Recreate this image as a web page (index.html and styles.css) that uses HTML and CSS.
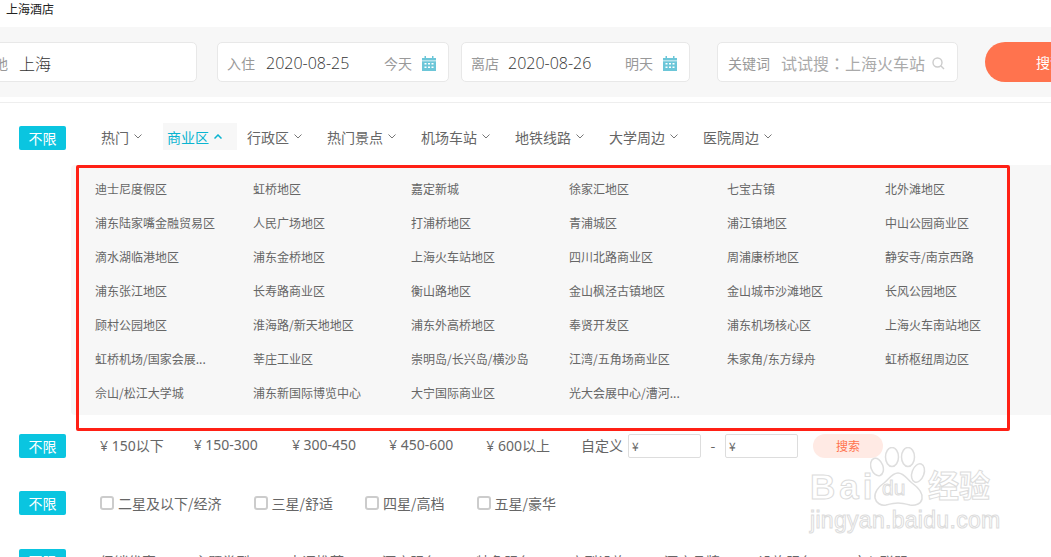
FILE: index.html
```html
<!DOCTYPE html>
<html lang="zh-CN">
<head>
    <meta charset="UTF-8">
    <title>上海酒店</title>
    <link rel="stylesheet" href="styles.css">
</head>
<body>
    <div class="page-title">上海酒店</div>

    <div class="search-wrap">
        <div class="search-band">
            <div class="field field-dest"><span class="field-label">目的地</span><span class="field-value">上海</span></div>
            <div class="field field-date field-in">
                <span class="field-label">入住</span><span class="field-value">2020-08-25</span>
                <span class="field-day">今天</span>
                <svg class="cal-icon" viewBox="0 0 14 15"><path fill="#6cc6d8" d="M0 2h2.5V0H4v2h6V0h1.5v2H14v13H0z"/><path fill="#fff" d="M0 4.5h14v.8H0zM2.5 7h2v1.5h-2zM6 7h2v1.5H6zm3.500 0h2v1.5h-2zM2.5 10.5h2V12h-2zm3.5 0h2V12H6zm3.5 0h2V12h-2z"/></svg>
            </div>
            <div class="field field-date field-out">
                <span class="field-label">离店</span><span class="field-value">2020-08-26</span>
                <span class="field-day">明天</span>
                <svg class="cal-icon" viewBox="0 0 14 15"><path fill="#6cc6d8" d="M0 2h2.5V0H4v2h6V0h1.5v2H14v13H0z"/><path fill="#fff" d="M0 4.5h14v.8H0zM2.5 7h2v1.5h-2zM6 7h2v1.5H6zm3.500 0h2v1.5h-2zM2.5 10.5h2V12h-2zm3.5 0h2V12H6zm3.5 0h2V12h-2z"/></svg>
            </div>
            <div class="field field-key">
                <span class="field-label">关键词</span><span class="field-hint" lang="zh-TW">试试搜：上海火车站</span>
                <svg class="search-icon" viewBox="0 0 13 13"><circle cx="5.5" cy="5.5" r="4.5" fill="none" stroke="#ccc" stroke-width="1.4"/><path d="M9 9l3 3" stroke="#ccc" stroke-width="1.4"/></svg>
            </div>
            <button class="search-btn">搜索</button>
        </div>
    </div>

    <div class="filter-row filter-area">
        <span class="badge">不限</span>
        <ul class="tabs">
            <li class="tab">热门<svg class="chev" viewBox="0 0 8 5"><path d="M.5.5L4 4 7.5.5"/></svg></li>
            <li class="tab active">商业区<svg class="chev" viewBox="0 0 8 5"><path d="M.5 4.5L4 1l3.5 3.5"/></svg></li>
            <li class="tab">行政区<svg class="chev" viewBox="0 0 8 5"><path d="M.5.5L4 4 7.5.5"/></svg></li>
            <li class="tab">热门景点<svg class="chev" viewBox="0 0 8 5"><path d="M.5.5L4 4 7.5.5"/></svg></li>
            <li class="tab">机场车站<svg class="chev" viewBox="0 0 8 5"><path d="M.5.5L4 4 7.5.5"/></svg></li>
            <li class="tab">地铁线路<svg class="chev" viewBox="0 0 8 5"><path d="M.5.5L4 4 7.5.5"/></svg></li>
            <li class="tab">大学周边<svg class="chev" viewBox="0 0 8 5"><path d="M.5.5L4 4 7.5.5"/></svg></li>
            <li class="tab">医院周边<svg class="chev" viewBox="0 0 8 5"><path d="M.5.5L4 4 7.5.5"/></svg></li>
        </ul>
    </div>

    <div class="area-panel">
        <span>迪士尼度假区</span><span>虹桥地区</span><span>嘉定新城</span><span>徐家汇地区</span><span>七宝古镇</span><span>北外滩地区</span>
        <span>浦东陆家嘴金融贸易区</span><span>人民广场地区</span><span>打浦桥地区</span><span>青浦城区</span><span>浦江镇地区</span><span>中山公园商业区</span>
        <span>滴水湖临港地区</span><span>浦东金桥地区</span><span>上海火车站地区</span><span>四川北路商业区</span><span>周浦康桥地区</span><span>静安寺/南京西路</span>
        <span>浦东张江地区</span><span>长寿路商业区</span><span>衡山路地区</span><span>金山枫泾古镇地区</span><span>金山城市沙滩地区</span><span>长风公园地区</span>
        <span>顾村公园地区</span><span>淮海路/新天地地区</span><span>浦东外高桥地区</span><span>奉贤开发区</span><span>浦东机场核心区</span><span>上海火车南站地区</span>
        <span>虹桥机场/国家会展...</span><span>莘庄工业区</span><span>崇明岛/长兴岛/横沙岛</span><span>江湾/五角场商业区</span><span>朱家角/东方绿舟</span><span>虹桥枢纽周边区</span>
        <span>佘山/松江大学城</span><span>浦东新国际博览中心</span><span>大宁国际商业区</span><span>光大会展中心/漕河...</span>
    </div>

    <div class="filter-row price-area">
        <span class="badge">不限</span>
        <div class="prices">
            <span>¥ 150以下</span><span class="price-range first-range">¥ 150-300</span><span class="price-range">¥ 300-450</span><span class="price-range">¥ 450-600</span><span>¥ 600以上</span>
        </div>
        <div class="custom-price">
            <span>自定义</span>
            <div class="price-input">¥</div>
            <span class="dash">-</span>
            <div class="price-input">¥</div>
            <button class="price-btn">搜索</button>
        </div>
    </div>

    <div class="filter-row star-area">
        <span class="badge">不限</span>
        <div class="stars">
            <label class="star"><i class="check"></i>二星及以下/经济</label>
            <label class="star"><i class="check"></i>三星/舒适</label>
            <label class="star"><i class="check"></i>四星/高档</label>
            <label class="star"><i class="check"></i>五星/豪华</label>
        </div>
    </div>

    <div class="filter-row more-area">
        <span class="badge">不限</span>
        <div class="more-items">
            <span>促销优惠</span><span>主题类型</span><span>点评推荐</span><span>酒店服务</span><span>特色服务</span><span>房型设施</span><span>酒店品牌</span><span>设施服务</span><span>床入联盟</span>
        </div>
    </div>

    <!-- annotation drawn over the screenshot -->
    <div class="red-box"></div>

    <!-- watermark -->
    <div class="watermark">
        <svg class="paw" viewBox="0 0 60 62">
            <g fill="#fff" stroke="#dedede" stroke-width="1.5">
                <ellipse cx="7" cy="20" rx="6" ry="9" transform="rotate(-20 7 20)"/>
                <ellipse cx="22" cy="10" rx="6.5" ry="9.5"/>
                <ellipse cx="38" cy="10" rx="6.5" ry="9.5"/>
                <ellipse cx="48" cy="26" rx="6" ry="9.5" transform="rotate(20 48 26)"/>
                <path d="M28 26c6 0 9 6 14 10 7 5 11 11 10 16-1 5-7 7-12 6-4-1-8-2-12-2s-8 1-12 2c-5 1-10-2-11-7-1-5 3-11 9-15 5-4 8-10 14-10z"/>
            </g>
        </svg>
        <span class="wm-bai">Bai</span>
        <span class="wm-du">du</span>
        <span class="wm-cn">经验</span>
        <span class="wm-url">jingyan.baidu.com</span>
    </div>
</body>
</html>
```

FILE: styles.css
```css
* {
    margin: 0;
    padding: 0;
    box-sizing: border-box;
}

body {
    width: 1051px;
    height: 557px;
    overflow: hidden;
    position: relative;
    background: #fff;
    color: #666;
    font-family: "Noto Sans CJK SC", "Noto Sans", sans-serif;
    font-size: 14px;
}

.page-title {
    height: 27px;
    padding: 1px 0 0 6px;
    font-size: 12px;
    line-height: 16px;
    color: #222;
}

/* search band */
.search-wrap {
    height: 76px;
    padding-bottom: 5px;
    border-bottom: 1px solid #eee;
}

.search-band {
    height: 70px;
    background: #f7f7f7;
    padding-top: 15px;
    display: flex;
    white-space: nowrap;
}

.field {
    flex: none;
    height: 40px;
    padding-top: 2px;
    background: #fff;
    border: 1px solid #e8e8e8;
    border-radius: 5px;
    display: flex;
    align-items: center;
}

.field-label {
    color: #999;
}

.field-value {
    color: #333;
    font-size: 16px;
    font-weight: 300;
    font-family: "Open Sans", "Noto Sans CJK SC", sans-serif;
}

.field-dest {
    width: 237px;
    margin-left: -40px;
    margin-right: 20px;
    padding-left: 5px;
}

.field-dest .field-value {
    margin-left: 11px;
    font-family: "Noto Sans CJK SC", sans-serif;
}

.field-date {
    padding-left: 9px;
}

.field-in .field-value {
    margin-left: 11px;
}

.field-out .field-value {
    margin-left: 9px;
}

.field-in {
    width: 232px;
    margin-right: 12px;
}

.field-out {
    width: 229px;
    margin-right: 27px;
}

.field-day {
    color: #999;
    margin-left: auto;
}

.cal-icon {
    width: 14px;
    height: 15px;
    margin: 0 12px 0 10px;
}

.field-key {
    width: 241px;
    padding-left: 10px;
    margin-right: 27px;
}

.field-hint {
    margin-left: 11px;
    color: #aaa;
    font-size: 16px;
    font-family: "Noto Sans CJK TC", sans-serif;
}

.search-icon {
    width: 13px;
    height: 13px;
    margin-left: auto;
    margin-right: 12px;
}

.search-btn {
    flex: none;
    width: 130px;
    height: 40px;
    border: none;
    border-radius: 20px;
    background: #ff734e;
    color: #fff;
    font-family: inherit;
    font-size: 14px;
}

/* filter rows */
.filter-row {
    display: flex;
    align-items: center;
    padding-left: 19px;
}

.badge {
    flex: none;
    width: 47px;
    height: 24px;
    line-height: 24px;
    text-align: center;
    color: #fff;
    font-size: 14px;
    background: #0ac5e0;
    border-radius: 2px;
}

.filter-area {
    height: 27px;
    margin-top: 20px;
}

.filter-area .badge {
    align-self: flex-end;
}

.tabs {
    display: flex;
    list-style: none;
    gap: 6px;
    margin-left: 31px;
}

.tab {
    display: flex;
    align-items: center;
    height: 27px;
    padding: 0 15px 0 4px;
}

.tab.active {
    color: #0ab4d0;
    background: #f7f7f7;
}

.chev {
    width: 8px;
    height: 5px;
    margin-left: 5px;
    fill: none;
    stroke: #777;
}

.active .chev {
    stroke: #0ab4d0;
    stroke-width: 1.5;
}

.area-panel {
    width: 1000px;
    height: 250px;
    margin: 15px 0 0 71px;
    padding: 6px 0 0 24px;
    background: #f7f7f7;
    border-radius: 4px;
    display: grid;
    grid-template-columns: repeat(6, 158px);
    grid-auto-rows: 34px;
    align-items: center;
    font-size: 12px;
}

.price-area {
    margin-top: 18px;
    height: 25px;
}

.prices {
    display: flex;
    gap: 30px;
    margin-left: 34px;
    padding-bottom: 2px;
    font-family: "Noto Sans", "Noto Sans CJK SC", sans-serif;
}

.price-range {
    margin-right: 3px;
}

.first-range {
    margin-right: 4px;
}

.custom-price {
    display: flex;
    align-items: center;
    margin-left: 31px;
}

.custom-price > span {
    padding-bottom: 2px;
}

.price-input {
    width: 73px;
    height: 24px;
    margin-left: 5px;
    padding-left: 3px;
    line-height: 22px;
    border: 1px solid #ddd;
    border-radius: 2px;
    font-size: 12px;
}

.dash {
    width: 24px;
    margin-right: -5px;
    text-align: center;
}

.price-btn {
    width: 70px;
    height: 24px;
    margin-left: 15px;
    border: none;
    border-radius: 12px;
    background: #ffeae4;
    color: #ff734e;
    font-family: inherit;
    font-size: 12px;
}

.star-area {
    margin-top: 32px;
    height: 25px;
}

.stars {
    display: flex;
    margin-left: 34px;
    gap: 32px;
}

.star {
    display: flex;
    align-items: center;
}

.check {
    width: 14px;
    height: 14px;
    margin-right: 4px;
    border: 2px solid #ccc;
    border-radius: 3px;
}

.more-area {
    margin-top: 33px;
    height: 25px;
}

.more-items {
    display: flex;
    gap: 38px;
    margin-left: 34px;
}

/* over the page */
.red-box {
    position: absolute;
    left: 76px;
    top: 165px;
    width: 934px;
    height: 266px;
    border: 3px solid #ff2015;
    border-radius: 2px;
}

.watermark {
    position: absolute;
    left: 800px;
    top: 440px;
    width: 200px;
    height: 100px;
    pointer-events: none;
}

.watermark span {
    position: absolute;
    color: #fff;
    -webkit-text-stroke: 1px #dcdcdc;
    font-family: "Liberation Sans", "Noto Sans CJK SC", sans-serif;
    white-space: nowrap;
}

.paw {
    position: absolute;
    left: 70px;
    top: 7px;
    width: 60px;
    height: 62px;
}

.wm-bai {
    left: 10px;
    top: 27px;
    font-size: 35px;
    line-height: 40px;
    font-weight: bold;
    letter-spacing: 4px;
}

.wm-du {
    left: 82px;
    top: 35px;
    font-size: 21px;
    line-height: 26px;
}

.wm-cn {
    left: 128px;
    top: 29px;
    font-size: 31px;
    line-height: 36px;
    font-weight: bold;
}

.wm-url {
    left: 10px;
    top: 66px;
    font-size: 23px;
    line-height: 28px;
    letter-spacing: .3px;
}
```
